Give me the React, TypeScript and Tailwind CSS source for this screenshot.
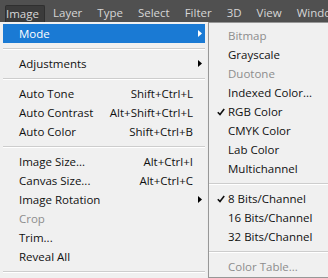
import React from "react";

type Item =
  | { kind: "sep" }
  | {
      kind?: "item";
      label: string;
      shortcut?: string;
      sub?: boolean;
      disabled?: boolean;
      active?: boolean;
      checked?: boolean;
    };

const font = { fontFamily: '"Open Sans", "Noto Sans", sans-serif' };

const mainItems: Item[] = [
  { label: "Mode", sub: true, active: true },
  { kind: "sep" },
  { label: "Adjustments", sub: true },
  { kind: "sep" },
  { label: "Auto Tone", shortcut: "Shift+Ctrl+L" },
  { label: "Auto Contrast", shortcut: "Alt+Shift+Ctrl+L" },
  { label: "Auto Color", shortcut: "Shift+Ctrl+B" },
  { kind: "sep" },
  { label: "Image Size...", shortcut: "Alt+Ctrl+I" },
  { label: "Canvas Size...", shortcut: "Alt+Ctrl+C" },
  { label: "Image Rotation", sub: true },
  { label: "Crop", disabled: true },
  { label: "Trim..." },
  { label: "Reveal All" },
  { kind: "sep" },
];

const modeItems: Item[] = [
  { label: "Bitmap", disabled: true },
  { label: "Grayscale" },
  { label: "Duotone", disabled: true },
  { label: "Indexed Color..." },
  { label: "RGB Color", checked: true },
  { label: "CMYK Color" },
  { label: "Lab Color" },
  { label: "Multichannel" },
  { kind: "sep" },
  { label: "8 Bits/Channel", checked: true },
  { label: "16 Bits/Channel" },
  { label: "32 Bits/Channel" },
  { kind: "sep" },
  { label: "Color Table...", disabled: true },
];

function Arrow({ white }: { white?: boolean }) {
  return (
    <svg width="4" height="7" viewBox="0 0 4 7" className="shrink-0">
      <path d="M0 0 L4 3.5 L0 7 Z" fill={white ? "#ffffff" : "#000000"} />
    </svg>
  );
}

function Check() {
  return (
    <svg width="8" height="8" viewBox="0 0 8 8">
      <path d="M0.8 4.2 L3 6.6 L7.2 1" fill="none" stroke="#111" strokeWidth="1.6" />
    </svg>
  );
}

function Separator() {
  return (
    <div className="flex h-[11px] flex-col justify-center">
      <div className="h-px bg-[#cdcdcd]" />
      <div className="h-px bg-white" />
    </div>
  );
}

function MainRow({ item }: { item: Extract<Item, { label: string }> }) {
  const color = item.active
    ? "text-white"
    : item.disabled
      ? "text-[#8d8d8d]"
      : "text-[#111]";
  return (
    <div
      className={`flex h-[19px] items-center pl-4 pr-[3px] ${color} ${item.active ? "bg-[#1a7ad4]" : ""}`}
    >
      <span className="flex-1">{item.label}</span>
      {item.shortcut && <span className="pr-[9px]">{item.shortcut}</span>}
      {item.sub && <Arrow white={item.active} />}
    </div>
  );
}

function SubRow({ item }: { item: Extract<Item, { label: string }> }) {
  return (
    <div
      className={`flex h-[19px] items-center ${item.disabled ? "text-[#8d8d8d]" : "text-[#111]"}`}
    >
      <span className="flex w-[19px] justify-end pr-[3px]">
        {item.checked && <Check />}
      </span>
      <span>{item.label}</span>
    </div>
  );
}

export default function App() {
  const tabs = ["Layer", "Type", "Select", "Filter", "3D", "View", "Window"];
  return (
    <div
      className="relative h-[278px] w-[328px] overflow-hidden bg-[#f0f0f0] text-[11.5px]"
      style={font}
    >
      <div className="flex h-[22px] items-end bg-[#505050] text-[11.5px] text-[#d6d6d6]">
        <div className="flex items-end whitespace-nowrap">
          <span className="ml-[5px] h-[17px] w-[40px] rounded-t-[2px] border border-b-0 border-[#2f2f2f] bg-[#3b3b3b] leading-[15px]">
            Image
          </span>
          <div className="ml-[8px] flex gap-[15px] pb-[2px] leading-[15px]">
            {tabs.map((t) => (
              <span key={t}>{t}</span>
            ))}
          </div>
        </div>
      </div>
      <div className="flex">
        <div className="w-[208px] shrink-0 px-[3px] pt-[2px]">
          {mainItems.map((it, i) =>
            it.kind === "sep" ? <Separator key={i} /> : <MainRow key={i} item={it} />,
          )}
        </div>
        <div className="w-[124px] shrink-0 border border-[#979797] bg-[#f0f0f0] pt-[3px] pb-[1px] shadow-[2px_2px_3px_rgba(0,0,0,0.25)]">
          {modeItems.map((it, i) =>
            it.kind === "sep" ? <Separator key={i} /> : <SubRow key={i} item={it} />,
          )}
        </div>
      </div>
    </div>
  );
}
